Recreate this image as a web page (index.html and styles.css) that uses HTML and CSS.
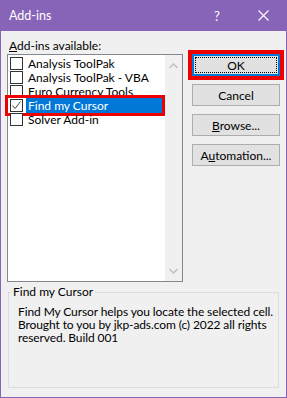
FILE: index.html
```html
<!DOCTYPE html>
<html lang="en">
<head>
  <meta charset="UTF-8" />
  <meta name="viewport" content="width=device-width, initial-scale=1.0" />
  <title>Add-ins</title>
  <link rel="stylesheet" href="styles.css">
</head>
<body>
  <div class="window">
    <div class="titlebar">
      <span class="title">Add-ins</span>
      <span class="help">?</span>
      <span class="close">
        <svg width="11" height="11" viewBox="0 0 11 11"><path d="M0.5 0.5 L10.5 10.5 M10.5 0.5 L0.5 10.5" stroke="#fff" stroke-width="1.1" fill="none"/></svg>
      </span>
    </div>

    <div class="content">
      <div class="main">
        <div class="list-col">
          <div class="label"><u>A</u>dd-ins available:</div>
          <div class="listbox">
            <div class="items">
              <div class="item"><span class="cb"></span><span class="name">Analysis ToolPak</span></div>
              <div class="item"><span class="cb"></span><span class="name">Analysis ToolPak - VBA</span></div>
              <div class="item"><span class="cb"></span><span class="name">Euro Currency Tools</span></div>
              <div class="item selected">
                <span class="cb checked">
                  <svg width="11" height="11" viewBox="0 0 11 11"><path d="M1.5 5.5 L4 8.5 L9.5 1.5" stroke="#444" stroke-width="1" fill="none"/></svg>
                </span>
                <span class="name">Find my Cursor</span>
              </div>
              <div class="item"><span class="cb"></span><span class="name">Solver Add-in</span></div>
            </div>
            <div class="scrollbar">
              <svg width="9" height="6" viewBox="0 0 9 6"><path d="M0.5 5 L4.5 1 L8.5 5" stroke="#c4c4c4" stroke-width="1.6" fill="none"/></svg>
              <svg width="9" height="6" viewBox="0 0 9 6"><path d="M0.5 1 L4.5 5 L8.5 1" stroke="#c4c4c4" stroke-width="1.6" fill="none"/></svg>
            </div>
          </div>
        </div>

        <div class="buttons">
          <button class="btn default"><span class="focus">OK</span></button>
          <button class="btn">Cancel</button>
          <button class="btn"><u>B</u>rowse...</button>
          <button class="btn">A<u>u</u>tomation...</button>
        </div>
      </div>

      <fieldset class="group">
        <legend>Find my Cursor</legend>
        <p>Find My Cursor helps you locate the selected cell. Brought to you by jkp-ads.com (c) 2022 all rights reserved. Build 001</p>
      </fieldset>
    </div>
  </div>
</body>
</html>
```

FILE: styles.css
```css
body {
  margin: 0;
  font-family: 'Segoe UI', Lato, sans-serif;
  font-size: 12px;
  color: #000;
  background: #f0f0f0;
}
.window {
  width: 287px;
  height: 398px;
  box-sizing: border-box;
  border: 1px solid #8764b8;
  border-top: none;
  background: #f0f0f0;
}
.titlebar {
  height: 31px;
  margin: 0 -1px;
  background: #8764b8;
  color: #fff;
  display: flex;
  align-items: center;
  font-size: 12.5px;
}
.title {
  margin-left: 9px;
  flex: 1;
}
.help {
  width: 14px;
  margin-right: 30px;
  font-size: 13px;
}
.close {
  margin-right: 18px;
  display: flex;
}
.content {
  padding: 7px 6px 0 6px;
}
.main {
  display: flex;
  gap: 9px;
}
.list-col {
  width: 176px;
}
.label {
  height: 16px;
  line-height: 16px;
  padding-left: 2px;
}
.listbox {
  height: 228px;
  box-sizing: border-box;
  border: 1px solid #828790;
  background: #fff;
  display: flex;
}
.items {
  flex: 1;
  padding-top: 1px;
}
.item {
  height: 14px;
  display: flex;
  align-items: center;
  position: relative;
}
.cb {
  width: 11px;
  height: 11px;
  border: 1px solid #333;
  background: #fff;
  margin: 0 3px 0 2px;
  flex: none;
  display: flex;
}
.name {
  padding-left: 2px;
  line-height: 15px;
  white-space: nowrap;
}
.selected .name {
  flex: 1;
  margin-right: 3px;
  background: #0078d7;
  color: #fff;
}
.selected::after {
  content: "";
  position: absolute;
  left: -3px;
  right: 0;
  top: -3px;
  bottom: -4px;
  border: 3px solid #ee0000;
}
.scrollbar {
  width: 17px;
  background: #f0f0f0;
  display: flex;
  flex-direction: column;
  justify-content: space-between;
  align-items: center;
  padding: 8px 0 7px;
  box-sizing: border-box;
}
.buttons {
  display: flex;
  flex-direction: column;
  gap: 8px;
  width: 88px;
  padding-top: 16px;
}
.btn {
  height: 22px;
  box-sizing: border-box;
  border: 1px solid #adadad;
  background: #e1e1e1;
  font-family: inherit;
  font-size: 12px;
  color: #000;
  padding: 0;
}
.btn.default {
  border: 2px solid #0078d7;
  outline: 4px solid #ee0000;
  outline-offset: 0;
  display: flex;
}
.focus {
  flex: 1;
  margin: 1px;
  border: 1px dotted #000;
  display: flex;
  align-items: center;
  justify-content: center;
}
.group {
  margin: 3px 1px 0 1px;
  padding: 0 0 0 9px;
  height: 103px;
  box-sizing: border-box;
  border: 1px solid #dcdcdc;
}
.group legend {
  padding: 0 2px;
  margin-left: -7px;
  line-height: 14px;
}
.group p {
  margin: 6px 0 0;
  line-height: 13px;
  letter-spacing: -0.1px;
}
```
